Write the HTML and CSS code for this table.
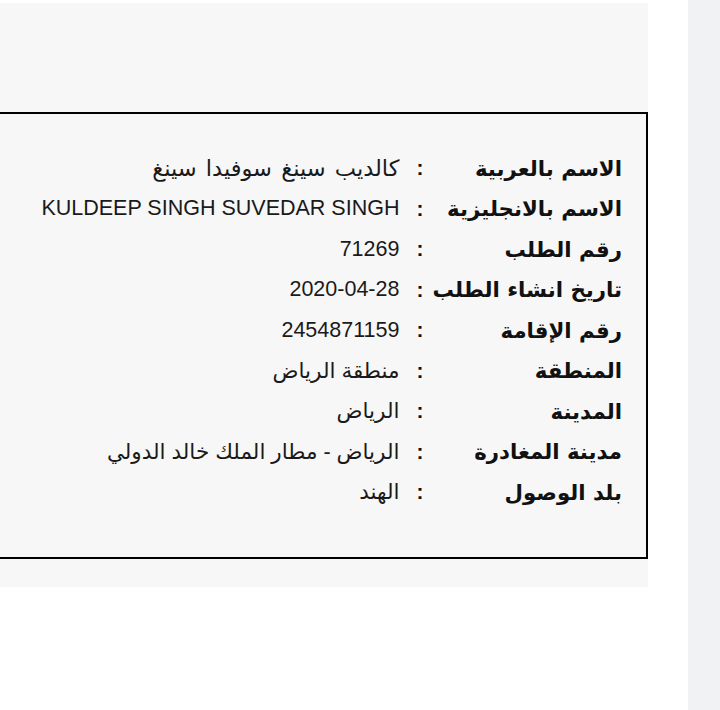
FILE: index.html
```html
<!DOCTYPE html>
<html lang="ar">
<head>
<meta charset="utf-8">
<title>تفاصيل الطلب</title>
<link rel="stylesheet" href="styles.css">
</head>
<body>
<div class="page">
  <main class="panel">
    <section class="card">
      <dl class="details">
        <dt class="label">الاسم بالعربية</dt><dd class="colon">:</dd><dd class="value value-wide">كالديب سينغ سوفيدا سينغ</dd>
        <dt class="label">الاسم بالانجليزية</dt><dd class="colon">:</dd><dd class="value">KULDEEP SINGH SUVEDAR SINGH</dd>
        <dt class="label">رقم الطلب</dt><dd class="colon">:</dd><dd class="value">71269</dd>
        <dt class="label">تاريخ انشاء الطلب</dt><dd class="colon">:</dd><dd class="value">2020-04-28</dd>
        <dt class="label">رقم الإقامة</dt><dd class="colon">:</dd><dd class="value">2454871159</dd>
        <dt class="label">المنطقة</dt><dd class="colon">:</dd><dd class="value">منطقة الرياض</dd>
        <dt class="label">المدينة</dt><dd class="colon">:</dd><dd class="value">الرياض</dd>
        <dt class="label">مدينة المغادرة</dt><dd class="colon">:</dd><dd class="value">الرياض - مطار الملك خالد الدولي</dd>
        <dt class="label">بلد الوصول</dt><dd class="colon">:</dd><dd class="value">الهند</dd>
      </dl>
    </section>
  </main>
  <aside class="rail"></aside>
</div>
</body>
</html>
```

FILE: styles.css
```css
html, body {
  margin: 0;
  padding: 0;
  background: #ffffff;
}

body {
  font-family: "Liberation Sans", "DejaVu Sans", sans-serif;
  color: #1a1a1a;
}

.page {
  display: flex;
  height: 710px;
  overflow: hidden;
}

.panel {
  width: 648px;
  height: 584px;
  margin-top: 3px;
  padding-top: 109px;
  box-sizing: border-box;
  background: #f7f7f7;
  flex-shrink: 0;
}

.card {
  height: 447px;
  box-sizing: border-box;
  border: 2px solid #000;
  border-left: none;
  padding: 34px 24px 0 0;
}

.details {
  direction: rtl;
  margin: 0;
  display: grid;
  grid-template-columns: max-content max-content 1fr;
  grid-auto-rows: 40.5px;
  align-items: center;
}

.label {
  font-family: "DejaVu Sans", sans-serif;
  font-weight: bold;
  font-size: 21.3px;
  color: #111;
  margin: 0;
}

.colon {
  margin: 0;
  padding-inline-start: 9px;
  padding-inline-end: 17px;
  font-size: 21px;
  font-weight: bold;
  color: #111;
}

.value {
  margin: 0;
  font-size: 21.5px;
  font-family: "Liberation Sans", "DejaVu Sans", sans-serif;
  white-space: nowrap;
}

.value-wide {
  font-size: 22.5px;
  word-spacing: 3px;
}

.rail {
  margin-left: 40px;
  width: 32px;
  flex-shrink: 0;
  background: #f1f2f4;
}
```
